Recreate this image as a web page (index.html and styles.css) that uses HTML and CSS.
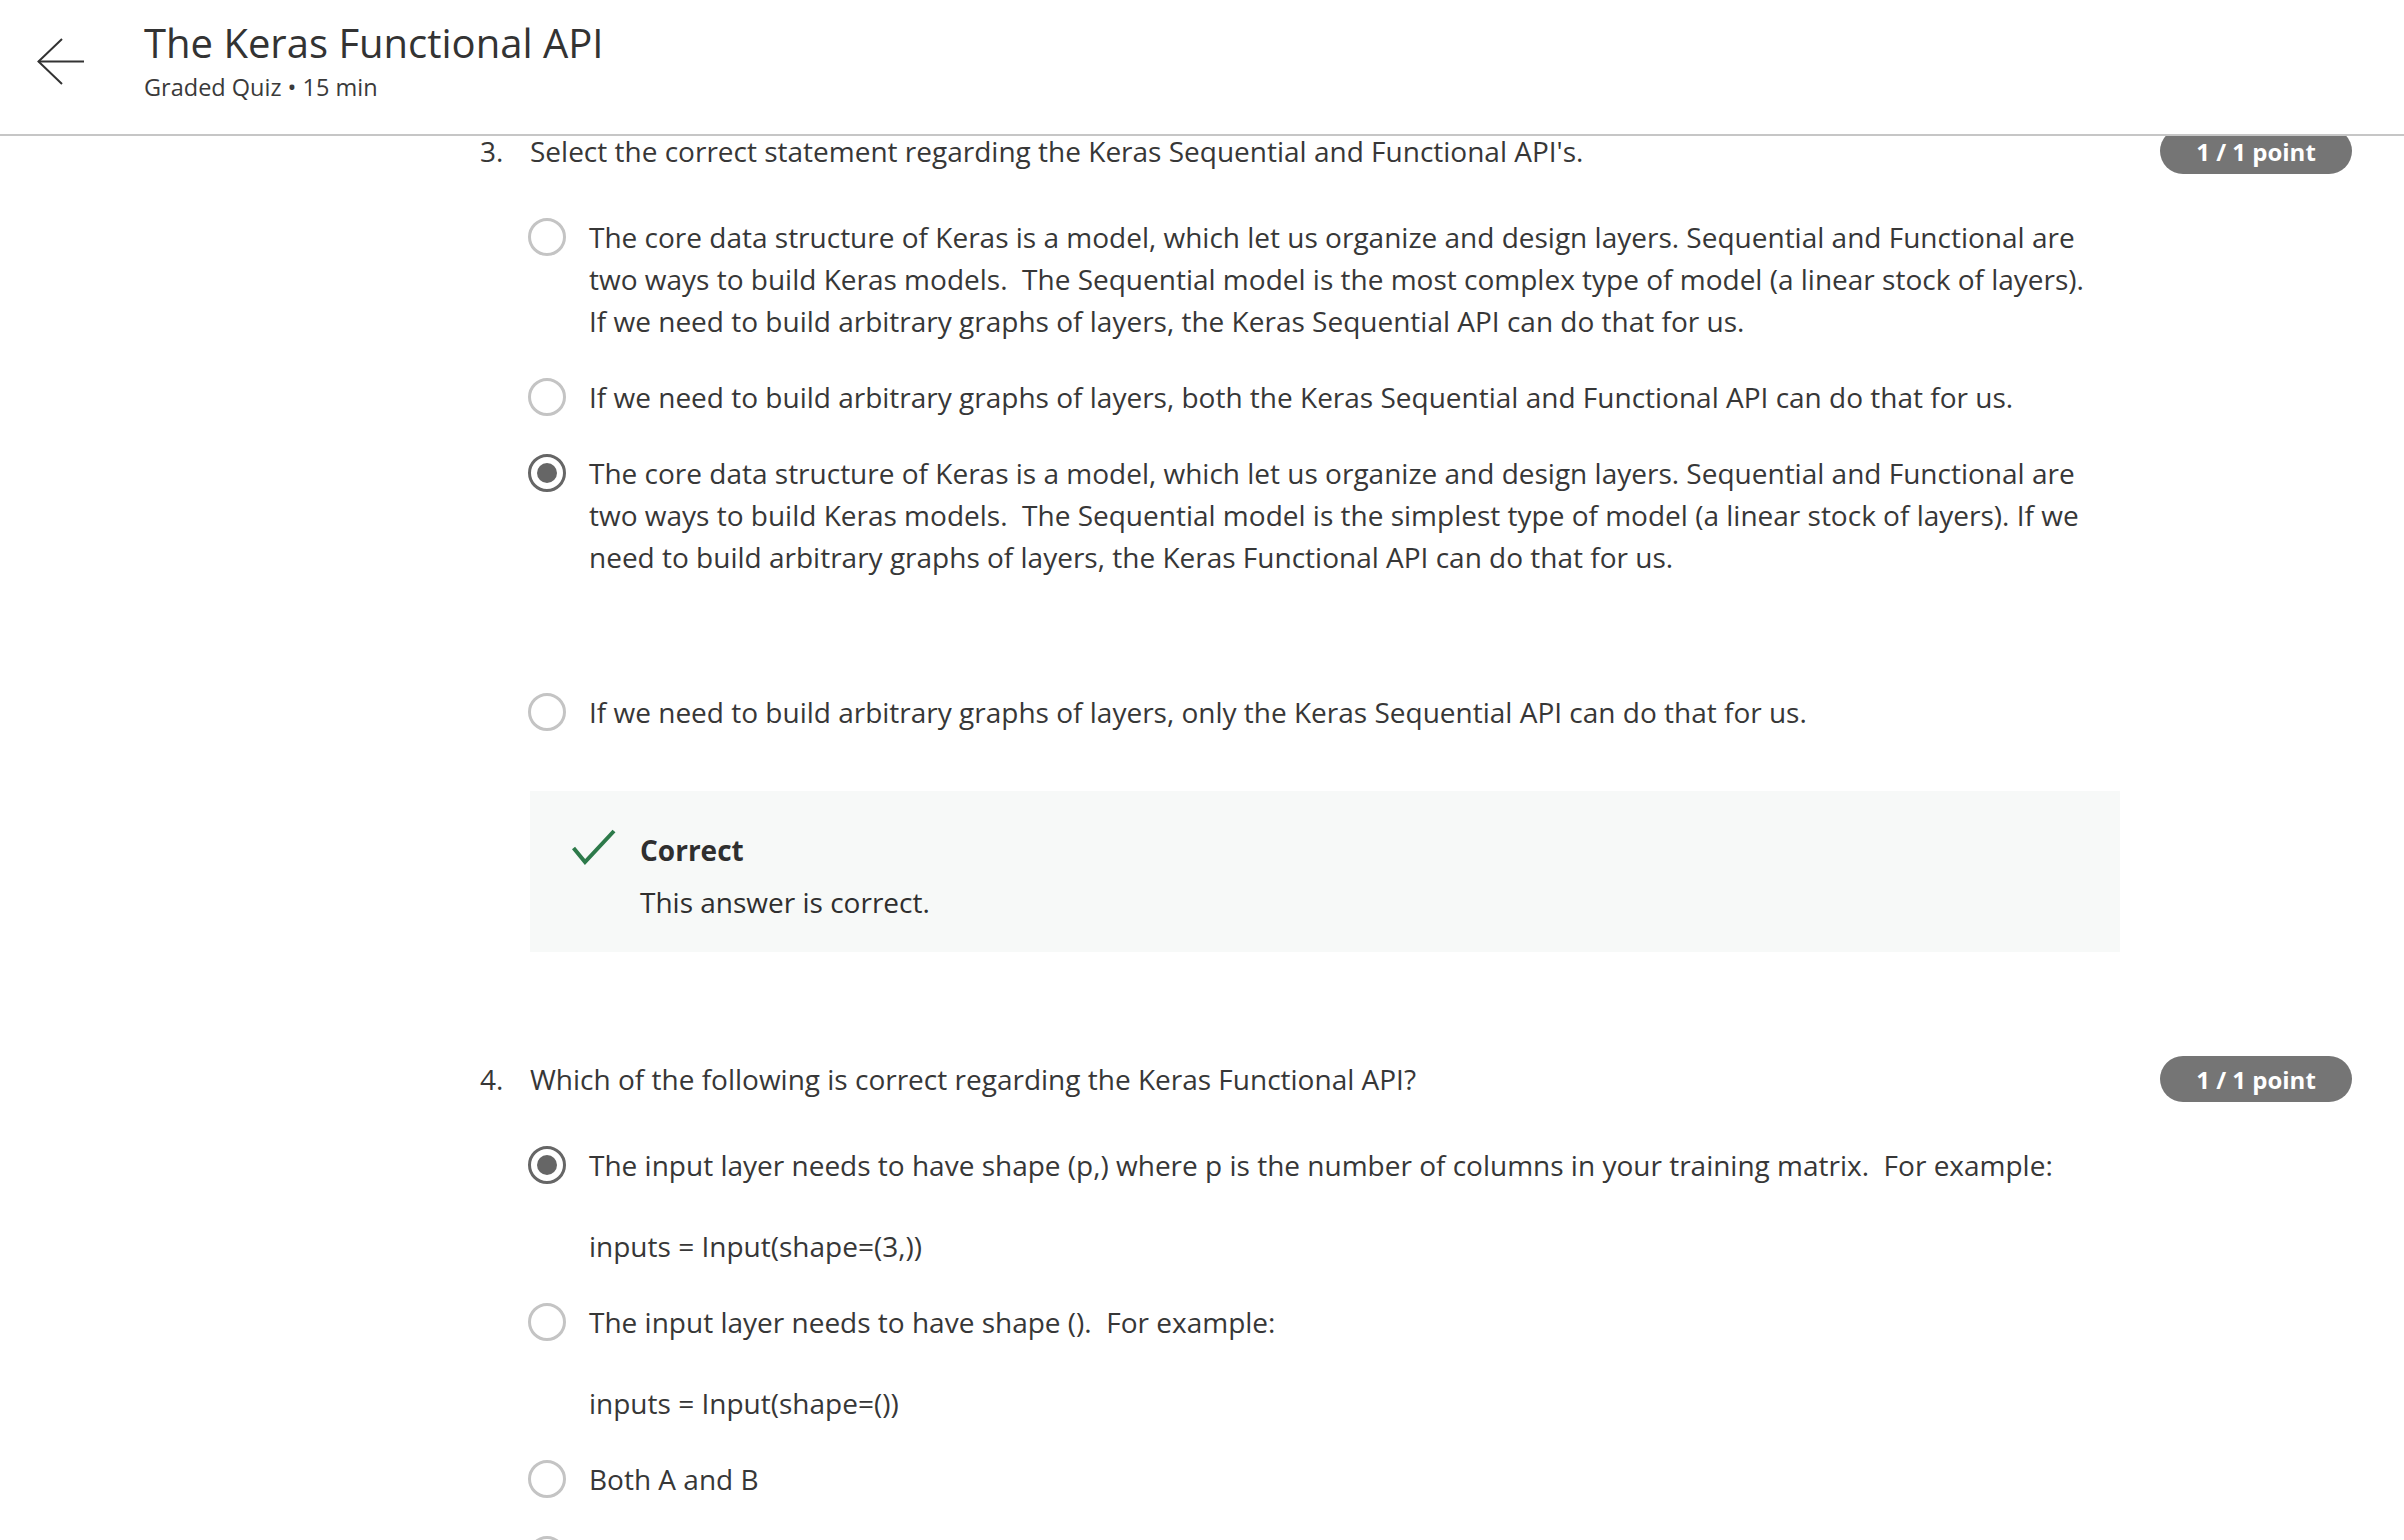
FILE: index.html
```html
<!DOCTYPE html>
<html lang="en">
<head>
<meta charset="utf-8">
<title>The Keras Functional API</title>
<link rel="stylesheet" href="styles.css">
</head>
<body>
<header class="topbar">
  <button class="back" aria-label="Back">
    <svg width="48" height="48" viewBox="0 0 48 48" fill="none" stroke="#333" stroke-width="2">
      <polyline points="25,1 1.5,23.5 25,46"/>
      <line x1="1.5" y1="23.5" x2="47" y2="23.5"/>
    </svg>
  </button>
  <div class="titles">
    <h1 class="title">The Keras Functional API</h1>
    <div class="subtitle">Graded Quiz • 15 min</div>
  </div>
</header>

<main class="quiz">
  <section class="question">
    <div class="q-head">
      <div class="q-prompt"><span class="q-num">3.</span><span class="q-text">Select the correct statement regarding the Keras Sequential and Functional API's.</span></div>
      <span class="badge">1 / 1 point</span>
    </div>
    <div class="options">
      <div class="option">
        <span class="radio"></span>
        <div class="opt-body"><p>The core data structure of Keras is a model, which let us organize and design layers. Sequential and Functional are two ways to build Keras models.&nbsp; The Sequential model is the most complex type of model (a linear stock of layers). If we need to build arbitrary graphs of layers, the Keras Sequential API can do that for us.</p></div>
      </div>
      <div class="option">
        <span class="radio"></span>
        <div class="opt-body"><p>If we need to build arbitrary graphs of layers, both the Keras Sequential and Functional API can do that for us.</p></div>
      </div>
      <div class="option">
        <span class="radio checked"></span>
        <div class="opt-body"><p>The core data structure of Keras is a model, which let us organize and design layers. Sequential and Functional are two ways to build Keras models.&nbsp; The Sequential model is the simplest type of model (a linear stock of layers). If we need to build arbitrary graphs of layers, the Keras Functional API can do that for us.</p><p class="blank">&nbsp;</p></div>
      </div>
      <div class="option">
        <span class="radio"></span>
        <div class="opt-body"><p>If we need to build arbitrary graphs of layers, only the Keras Sequential API can do that for us.</p></div>
      </div>
    </div>
    <div class="feedback">
      <svg class="check" width="44" height="36" viewBox="0 0 44 36" fill="none" stroke="#2d7a4a" stroke-width="4">
        <polyline points="1.5,19 13,33 42,2"/>
      </svg>
      <div class="fb-text">
        <div class="fb-title">Correct</div>
        <div class="fb-msg">This answer is correct.</div>
      </div>
    </div>
  </section>

  <section class="question q-next">
    <div class="q-head">
      <div class="q-prompt"><span class="q-num">4.</span><span class="q-text">Which of the following is correct regarding the Keras Functional API?</span></div>
      <span class="badge">1 / 1 point</span>
    </div>
    <div class="options">
      <div class="option">
        <span class="radio checked"></span>
        <div class="opt-body"><p>The input layer needs to have shape (p,) where p is the number of columns in your training matrix.&nbsp; For example:</p><p>inputs = Input(shape=(3,))</p></div>
      </div>
      <div class="option">
        <span class="radio"></span>
        <div class="opt-body"><p>The input layer needs to have shape ().&nbsp; For example:</p><p>inputs = Input(shape=())</p></div>
      </div>
      <div class="option">
        <span class="radio"></span>
        <div class="opt-body"><p>Both A and B</p></div>
      </div>
      <div class="option">
        <span class="radio"></span>
        <div class="opt-body"><p>None of the above</p></div>
      </div>
    </div>
  </section>
</main>
</body>
</html>
```

FILE: styles.css
```css
* { box-sizing: border-box; }

body {
  margin: 0;
  font-family: "Open Sans", "Liberation Sans", sans-serif;
  color: #373737;
  background: #fff;
}

.topbar {
  position: fixed;
  top: 0;
  left: 0;
  right: 0;
  height: 136px;
  background: #fff;
  border-bottom: 2px solid #c6c6c6;
  display: flex;
  align-items: flex-start;
  padding: 18px 0 0 37px;
  z-index: 10;
}

.back {
  border: 0;
  background: none;
  padding: 0;
  margin: 20px 59px 0 0;
  width: 48px;
  height: 48px;
  display: block;
}
.back svg { display: block; }

.titles { display: flex; flex-direction: column; gap: 3px; }

.title {
  margin: 0;
  font-size: 40px;
  line-height: 50px;
  font-weight: 400;
  color: #333;
}

.subtitle {
  font-size: 23.5px;
  line-height: 32px;
  color: #3a3a3a;
}

.quiz {
  padding: 128px 52px 0 480px;
}

.q-next { margin-top: 104px; }

.q-head {
  display: flex;
  align-items: center;
  justify-content: space-between;
}

.q-prompt {
  display: flex;
  font-size: 28px;
  line-height: 42px;
}

.q-num { width: 50px; flex: none; }

.badge {
  width: 192px;
  height: 46px;
  border-radius: 23px;
  background: #757575;
  color: #fff;
  font-weight: 700;
  font-size: 24px;
  display: flex;
  align-items: center;
  justify-content: center;
}

.options {
  margin: 42px 0 0 50px;
  width: 1590px;
  display: flex;
  flex-direction: column;
  gap: 34px;
}

.option {
  display: flex;
  align-items: flex-start;
  font-size: 28px;
  line-height: 42px;
}

.radio {
  flex: none;
  width: 38px;
  height: 38px;
  margin: 2px 23px 0 -2px;
  border-radius: 50%;
  border: 3px solid #c4c4c4;
  background: #fff;
  position: relative;
}

.radio.checked { border-color: #666; }
.radio.checked::after {
  content: "";
  position: absolute;
  left: 6px;
  top: 6px;
  width: 20px;
  height: 20px;
  border-radius: 50%;
  background: #666;
}

.opt-body { width: 1515px; }
.opt-body p { margin: 0; }
.opt-body p + p { margin-top: 39px; }
.opt-body p.blank { margin-top: 37px; }

.feedback {
  margin: 58px 0 0 50px;
  width: 1590px;
  background: #f7f9f8;
  display: flex;
  align-items: flex-start;
  padding: 38px 40px 29px 42px;
}

.check { flex: none; display: block; margin-right: 24px; }

.fb-text { font-size: 28px; line-height: 42px; color: #2f2f2f; }
.fb-title { font-weight: 700; margin-bottom: 10px; }
```
